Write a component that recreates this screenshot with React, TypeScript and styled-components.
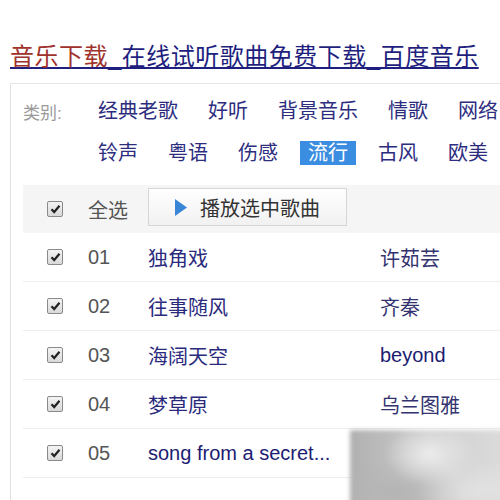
import React from "react";
import styled, { createGlobalStyle } from "styled-components";

const GlobalStyle = createGlobalStyle`
  html, body {
    margin: 0;
    padding: 0;
    background: #fff;
    overflow: hidden;
  }
  body {
    font-family: "Liberation Sans", "Noto Sans CJK SC", sans-serif;
  }
`;

const Page = styled.div`
  position: relative;
  width: 500px;
  height: 500px;
  padding: 43px 0 0 10px;
  box-sizing: border-box;
`;

const Title = styled.a`
  display: inline-block;
  font-size: 24px;
  line-height: 28px;
  letter-spacing: 0.5px;
  color: #1f1f80;
  text-decoration: underline;
  white-space: nowrap;
  margin-bottom: 12px;
`;

const TitleRed = styled.span`
  color: #a0322c;
`;

const Panel = styled.div`
  border-top: 1px solid #e6e6e6;
  border-left: 1px solid #e2e2e2;
  padding: 6px 0 0 12px;
  height: 420px;
  box-sizing: border-box;
`;

const CategoryRow = styled.div`
  display: flex;
  align-items: center;
  height: 42px;
  white-space: nowrap;
`;

const CategoryLabel = styled.span<{ $hidden?: boolean }>`
  width: 67px;
  flex: none;
  font-size: 17px;
  color: #9a9a9a;
  visibility: ${({ $hidden }) => ($hidden ? "hidden" : "visible")};
`;

const CategoryList = styled.div<{ $gap: number }>`
  display: flex;
  gap: ${({ $gap }) => $gap}px;
`;

const CategoryItem = styled.span<{ $active?: boolean }>`
  padding: 0 8px;
  font-size: 20px;
  line-height: 24px;
  color: ${({ $active }) => ($active ? "#fff" : "#2d2d80")};
  background: ${({ $active }) => ($active ? "#3a8de0" : "transparent")};
`;

const ListHead = styled.div`
  display: grid;
  grid-template-columns: 65px 60px 1fr;
  align-items: center;
  height: 48px;
  margin-top: 11px;
  background: #f5f5f5;
`;

const SongRow = styled.div`
  display: grid;
  grid-template-columns: 65px 60px 232px 1fr;
  align-items: center;
  height: 48px;
  border-bottom: 1px solid #eeeeee;
  font-size: 20px;
`;

const CheckCell = styled.div`
  padding-left: 24px;
  display: flex;
  align-items: center;
`;

const CheckBox = styled.span`
  width: 14px;
  height: 14px;
  border: 1px solid #8a8a8a;
  border-radius: 2px;
  background: linear-gradient(#f4f4f4, #d9d9d9);
  display: flex;
  align-items: center;
  justify-content: center;
`;

const Muted = styled.span`
  font-size: 20px;
  color: #555;
`;

const PlayButton = styled.button`
  display: flex;
  align-items: center;
  gap: 13px;
  width: 199px;
  height: 38px;
  padding: 0 0 0 26px;
  border: 1px solid #d6d6d6;
  background: linear-gradient(#ffffff, #f1f1f1);
  font-family: inherit;
  font-size: 20px;
  color: #333;
  margin-top: -4px;
`;

const SongName = styled.a<{ $latin?: boolean }>`
  color: ${({ $latin }) => ($latin ? "#1c1c72" : "#2b2b7e")};
  text-decoration: none;
  white-space: nowrap;
`;

const Artist = styled.a<{ $latin?: boolean }>`
  color: ${({ $latin }) => ($latin ? "#1c1c72" : "#333370")};
  text-decoration: none;
  white-space: nowrap;
`;

const Watermark = styled.div`
  position: absolute;
  left: 350px;
  top: 430px;
  width: 160px;
  height: 80px;
  background:
    radial-gradient(ellipse at 50% 30%, #ececec 0%, rgba(236,236,236,0) 40%),
    radial-gradient(ellipse at 85% 75%, #e2e2e2 0%, rgba(226,226,226,0) 35%),
    radial-gradient(ellipse at 30% 80%, #b4b4b4 0%, rgba(180,180,180,0) 40%),
    linear-gradient(90deg, #b0b0b0, #c4c4c4 35%, #d4d4d4 70%, #dcdcdc);
  filter: blur(2px);
`;

const Check = () => (
  <CheckBox>
    <svg width="11" height="10" viewBox="0 0 11 10">
      <path d="M1.5 5.2 L4.2 8 L9.5 1.8" fill="none" stroke="#222" strokeWidth="2.2" />
    </svg>
  </CheckBox>
);

const row1 = ["经典老歌", "好听", "背景音乐", "情歌", "网络"];
const row2 = ["铃声", "粤语", "伤感", "流行", "古风", "欧美"];

const songs = [
  { no: "01", name: "独角戏", artist: "许茹芸" },
  { no: "02", name: "往事随风", artist: "齐秦" },
  { no: "03", name: "海阔天空", artist: "beyond", latinArtist: true },
  { no: "04", name: "梦草原", artist: "乌兰图雅" },
  { no: "05", name: "song from a secret...", artist: "", latinName: true },
];

export default function App() {
  return (
    <Page>
      <GlobalStyle />
      <Title>
        <TitleRed>音乐下载</TitleRed>_在线试听歌曲免费下载_百度音乐
      </Title>
      <Panel>
        <CategoryRow>
          <CategoryLabel>类别:</CategoryLabel>
          <CategoryList $gap={14}>
            {row1.map((c) => (
              <CategoryItem key={c}>{c}</CategoryItem>
            ))}
          </CategoryList>
        </CategoryRow>
        <CategoryRow>
          <CategoryLabel $hidden>类别:</CategoryLabel>
          <CategoryList $gap={14}>
            {row2.map((c) => (
              <CategoryItem key={c} $active={c === "流行"}>
                {c}
              </CategoryItem>
            ))}
          </CategoryList>
        </CategoryRow>
        <ListHead>
          <CheckCell>
            <Check />
          </CheckCell>
          <Muted>全选</Muted>
          <div>
            <PlayButton>
              <svg width="12" height="17" viewBox="0 0 12 17">
                <path d="M0 0 L12 8.5 L0 17 Z" fill="#3a86d6" />
              </svg>
              播放选中歌曲
            </PlayButton>
          </div>
        </ListHead>
        {songs.map((s) => (
          <SongRow key={s.no}>
            <CheckCell>
              <Check />
            </CheckCell>
            <Muted>{s.no}</Muted>
            <SongName $latin={s.latinName}>{s.name}</SongName>
            <Artist $latin={s.latinArtist}>{s.artist}</Artist>
          </SongRow>
        ))}
      </Panel>
      <Watermark />
    </Page>
  );
}
